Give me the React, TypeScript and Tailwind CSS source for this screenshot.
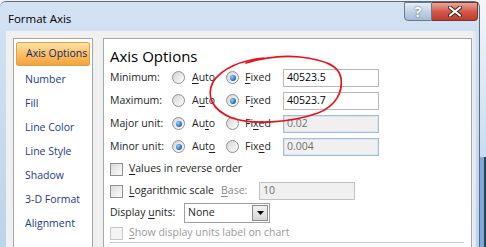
import React from 'react'

const navItems = ['Axis Options', 'Number', 'Fill', 'Line Color', 'Line Style', 'Shadow', '3-D Format', 'Alignment']

function Mn({ text, i }: { text: string; i: number }) {
  return (
    <span>
      {text.slice(0, i)}
      <span className="underline underline-offset-2">{text[i]}</span>
      {text.slice(i + 1)}
    </span>
  )
}

function Radio({ on }: { on?: boolean }) {
  return (
    <div className="w-[13px] h-[13px] rounded-full border border-[#8f8f8f] bg-gradient-to-br from-[#d4d4d4] to-[#ffffff] flex items-center justify-center shrink-0">
      {on && <div className="w-[6px] h-[6px] rounded-full bg-[radial-gradient(circle_at_35%_35%,#8fd0ff,#1866b8_70%)]" />}
    </div>
  )
}

function Check({ dim }: { dim?: boolean }) {
  return (
    <div className={`w-[13px] h-[13px] border shrink-0 ${dim ? 'border-[#c8c8c8] bg-[#f4f4f4]' : 'border-[#8e8f8f] bg-gradient-to-br from-[#dcdcdc] to-[#fbfbfb]'}`} />
  )
}

const rows = [
  { label: 'Minimum:', fixed: true, value: '40523.5' },
  { label: 'Maximum:', fixed: true, value: '40523.7' },
  { label: 'Major unit:', fixed: false, value: '0.02' },
  { label: 'Minor unit:', fixed: false, value: '0.004' },
]

export default function App() {
  return (
    <div className="w-[486px] h-[247px] overflow-hidden relative bg-[#eef2f7] flex text-[10.5px] text-[#1e1e1e] whitespace-nowrap" style={{ fontFamily: '"Open Sans", "Noto Sans", sans-serif' }}>
      {/* window */}
      <div className="w-[480px] h-[247px] mt-[1px] rounded-tr-[6px] rounded-tl-[6px] border-r border-t border-[#5d6b7c] bg-gradient-to-b from-[#d3e2f3] to-[#bcd3ec] flex flex-col">
        <div className="h-[29px] flex items-start justify-between shrink-0">
          <div className="pl-[8px] pt-[8px] text-[11.5px] text-black">Format Axis</div>
          <div className="flex mr-[1px]">
            <div className="w-[28px] h-[19px] border border-[#6a7b90] rounded-bl-[4px] bg-gradient-to-b from-[#e6eef8] via-[#c3d3e6] to-[#a5bbd6] flex items-center justify-center text-white font-bold text-[14px] leading-none [text-shadow:0_0_2px_#38475a]">?</div>
            <div className="w-[46px] h-[19px] border border-l-0 border-[#6a3a33] rounded-br-[4px] bg-gradient-to-b from-[#e9a79b] via-[#d2584a] to-[#c0392b] flex items-center justify-center">
              <svg width="14" height="11" viewBox="0 0 14 11">
                <path d="M2 1.5 L12 9.5 M12 1.5 L2 9.5" stroke="#3c2420" strokeWidth="4" strokeLinecap="round" />
                <path d="M2 1.5 L12 9.5 M12 1.5 L2 9.5" stroke="#ffffff" strokeWidth="2.2" strokeLinecap="round" />
              </svg>
            </div>
          </div>
        </div>
        <div className="flex flex-1 pl-[6px] pr-[3px]">
          <div className="flex-1 bg-[#f0f0f0] flex pt-[7px] pl-[7px] gap-[10px]">
            {/* nav */}
            <div className="w-[80px] bg-white border border-[#a7a7a7] border-b-0 pt-[3px] px-[2px] flex flex-col">
              {navItems.map((n, i) => (
                <div key={n} className={`h-[24px] pl-[9px] flex items-center text-[#1d3a8a] ${i === 0 ? 'h-[22px] mb-[2px] border border-[#e1a243] rounded-[2px] bg-gradient-to-b from-[#fde3a7] via-[#f9bf66] to-[#f4a33b] text-[#11296c]' : ''}`}>
                  {n}
                </div>
              ))}
            </div>
            {/* options */}
            <div className="w-[369px] bg-white border border-[#a7a7a7] border-b-0 pl-[6px] pr-[6px] flex flex-col">
              <div className="h-[27px] pt-[7px] text-[15px] leading-[20px] text-black">Axis Options</div>
              {rows.map((r, i) => (
                <div key={r.label} className="h-[23px] flex items-center">
                  <div className="w-[62px]">{r.label}</div>
                  <Radio on={!r.fixed} />
                  <div className="w-[41px] pl-[7px]"><Mn text="Auto" i={i} /></div>
                  <Radio on={r.fixed} />
                  <div className="w-[44px] pl-[6px]"><Mn text="Fixed" i={i} /></div>
                  <div className={`w-[96px] h-[18px] border pl-[3px] flex items-center ${r.fixed ? 'border-[#b9b9b9] bg-white text-black' : 'border-[#a3bbd8] bg-[#f0f0f0] text-[#707070] shadow-[inset_0_0_0_1px_#dbe5f1]'}`}>
                    {r.value}
                  </div>
                </div>
              ))}
              <div className="h-[22px] flex items-center">
                <Check />
                <div className="pl-[6px]"><Mn text="Values in reverse order" i={0} /></div>
              </div>
              <div className="h-[22px] flex items-center">
                <Check />
                <div className="w-[98px] pl-[6px]"><Mn text="Logarithmic scale" i={0} /></div>
                <div className="w-[38px] text-[#8a8a8a]"><Mn text="Base:" i={0} /></div>
                <div className="w-[96px] h-[18px] border border-[#c2c2c2] bg-[#f0f0f0] pl-[3px] flex items-center text-[#707070]">10</div>
              </div>
              <div className="h-[22px] flex items-center">
                <div className="w-[74px]">Display <Mn text="units" i={0} />:</div>
                <div className="w-[86px] h-[20px] border border-[#a0a0a0] flex items-center justify-between pl-[3px] pr-[1px]">
                  <span>None</span>
                  <div className="w-[16px] h-[16px] border border-[#8c8c8c] bg-gradient-to-b from-[#f3f3f3] to-[#d6d6d6] flex items-center justify-center">
                    <svg width="7" height="4" viewBox="0 0 7 4"><path d="M0 0 H7 L3.5 4 Z" fill="#000" /></svg>
                  </div>
                </div>
              </div>
              <div className="h-[19px] flex items-center border-b border-[#c9c9c9] text-[#9a9a9a] mr-[1px]">
                <Check dim />
                <div className="pl-[6px]"><Mn text="Show display units label on chart" i={0} /></div>
              </div>
            </div>
          </div>
          <div className="w-[3px] bg-[#e1e9f3]" />
        </div>
      </div>
      {/* desktop behind right edge */}
      <div className="w-[6px] flex flex-col">
        <div className="h-[157px] bg-gradient-to-b from-[#f4f6f8] to-[#c8dcf0]" />
        <div className="flex-1 bg-[#7ea8da] border-r-2 border-[#2d3e55]" />
      </div>
      {/* hand-drawn annotation */}
      <svg className="absolute left-0 top-0 pointer-events-none" width="486" height="247" viewBox="0 0 486 247">
        <path
          d="M264 58 C242 60 222 68 213 82 C206 96 212 110 232 118 C252 125 290 123 318 113 C336 106 343 92 341 78 C339 66 326 60 300 57 C280 55 262 58 246 63"
          fill="none"
          stroke="#e8131d"
          strokeWidth="1.7"
          strokeLinecap="round"
        />
      </svg>
    </div>
  )
}
